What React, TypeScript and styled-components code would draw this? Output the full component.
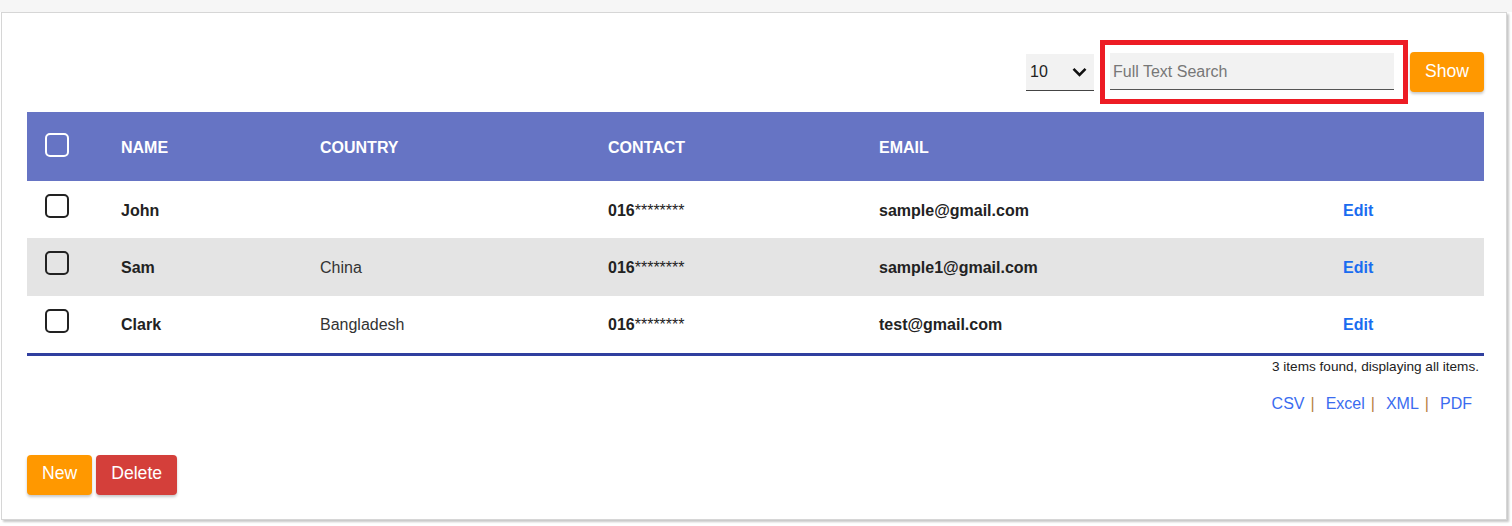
import React from "react";
import styled, { createGlobalStyle } from "styled-components";

const GlobalStyle = createGlobalStyle`
  html, body { margin: 0; padding: 0; background: #f6f6f6; }
  body { font-family: "Liberation Sans", Arial, sans-serif; color: #222; }
  * { box-sizing: border-box; }
`;

const Page = styled.div`
  padding: 12px 0 0 1px;
  height: 526px;
  background: linear-gradient(#f6f6f6 0 12px, #fff 12px);
`;

const Card = styled.div`
  width: 1506px;
  background: #fff;
  border: 1px solid #d6d6d6;
  box-shadow: 2px 2px 2px #c8c8c8;
  padding: 27px 22px 24px 25px;
`;

const Toolbar = styled.div`
  display: flex;
  justify-content: flex-end;
  align-items: center;
  height: 64px;
  margin-bottom: 8px;
`;

const SelectBox = styled.div`
  width: 68px;
  height: 37px;
  background: #f2f2f2;
  border-bottom: 1px solid #444;
  display: flex;
  align-items: center;
  justify-content: space-between;
  padding: 1px 7px 0 4px;
  font-size: 16px;
  color: #222;
  margin-right: 6px;
`;

const Highlight = styled.div`
  border: 5px solid #ed1c24;
  padding: 8px 9px 9px 5px;
  margin-right: 2px;
`;

const SearchInput = styled.input`
  display: block;
  width: 284px;
  height: 37px;
  background: #f2f2f2;
  border: none;
  border-bottom: 1px solid #555;
  outline: none;
  padding: 2px 3px 0;
  font-family: "Liberation Sans", Arial, sans-serif;
  font-size: 16px;
  color: #222;
  &::placeholder { color: #777; }
`;

const Button = styled.button<{ $tone: "orange" | "red" }>`
  height: 40px;
  padding: 0 15px 2px;
  border: none;
  border-radius: 4px;
  background: ${(p) => (p.$tone === "orange" ? "#ff9800" : "#d43f3a")};
  color: #fff;
  font-family: "Liberation Sans", Arial, sans-serif;
  font-size: 17.6px;
  box-shadow: 0 2px 3px rgba(0, 0, 0, 0.22);
  cursor: pointer;
`;

const Table = styled.div`
  width: 1457px;
  border-bottom: 3px solid #303f9f;
`;

const cols = "94px 199px 288px 271px 464px 141px";

const HeadRow = styled.div`
  display: grid;
  grid-template-columns: ${cols};
  height: 69px;
  background: #6674c4;
  color: #fff;
  font-weight: bold;
  font-size: 16px;
  text-transform: uppercase;
`;

const Row = styled.div<{ $striped?: boolean }>`
  display: grid;
  grid-template-columns: ${cols};
  height: 57.33px;
  background: ${(p) => (p.$striped ? "#e4e4e4" : "#fff")};
  font-size: 16px;
`;

const Cell = styled.div<{ $bold?: boolean; $light?: boolean }>`
  display: flex;
  align-items: center;
  padding-top: ${(p) => (p.$light ? 2 : 2)}px;
  font-weight: ${(p) => (p.$bold ? "bold" : "normal")};
  color: ${(p) => (p.$light ? "#fff" : p.$bold ? "#222" : "#333")};
  white-space: nowrap;
`;

const CheckCell = styled.div<{ $top: number }>`
  padding: ${(p) => p.$top}px 0 0 18px;
`;

const Box = styled.div<{ $light?: boolean }>`
  width: 24px;
  height: 24px;
  border: 2px solid ${(p) => (p.$light ? "#fff" : "#222")};
  border-radius: 5px;
`;

const Stars = styled.span`
  font-weight: normal;
`;

const EditLink = styled.a`
  color: #1a6cf0;
  font-weight: bold;
  text-decoration: none;
`;

const Summary = styled.div`
  margin-top: 3px;
  line-height: 16px;
  font-size: 13.6px;
  text-align: right;
  padding-right: 5px;
  color: #222;
`;

const Exports = styled.div`
  margin-top: 20px;
  line-height: 18px;
  font-size: 16px;
  display: flex;
  justify-content: flex-end;
  padding-right: 12px;
`;

const ExportLink = styled.a`
  color: #3a6cf0;
  text-decoration: none;
`;

const Sep = styled.span`
  color: #b8823f;
  margin: 0 11px 0 6px;
`;

const Actions = styled.div`
  margin-top: 42px;
  display: flex;
  gap: 4px;
`;

const Chevron = () => (
  <svg width="15" height="10" viewBox="0 0 15 10">
    <path d="M1.5 1.8 L7.5 7.8 L13.5 1.8" fill="none" stroke="#111" strokeWidth="2.6" />
  </svg>
);

const rows = [
  { name: "John", country: "", email: "sample@gmail.com" },
  { name: "Sam", country: "China", email: "sample1@gmail.com" },
  { name: "Clark", country: "Bangladesh", email: "test@gmail.com" },
];

export default function App() {
  return (
    <Page>
      <GlobalStyle />
      <Card>
        <Toolbar>
          <SelectBox>
            <span>10</span>
            <Chevron />
          </SelectBox>
          <Highlight>
            <SearchInput placeholder="Full Text Search" />
          </Highlight>
          <Button $tone="orange">Show</Button>
        </Toolbar>
        <Table>
          <HeadRow>
            <CheckCell $top={21}>
              <Box $light />
            </CheckCell>
            <Cell $bold $light>Name</Cell>
            <Cell $bold $light>Country</Cell>
            <Cell $bold $light>Contact</Cell>
            <Cell $bold $light>Email</Cell>
            <Cell />
          </HeadRow>
          {rows.map((r, i) => (
            <Row key={r.name} $striped={i === 1}>
              <CheckCell $top={13}>
                <Box />
              </CheckCell>
              <Cell $bold>{r.name}</Cell>
              <Cell>{r.country}</Cell>
              <Cell $bold>
                016<Stars>********</Stars>
              </Cell>
              <Cell $bold>{r.email}</Cell>
              <Cell>
                <EditLink href="#">Edit</EditLink>
              </Cell>
            </Row>
          ))}
        </Table>
        <Summary>3 items found, displaying all items.</Summary>
        <Exports>
          <ExportLink href="#">CSV</ExportLink>
          <Sep>|</Sep>
          <ExportLink href="#">Excel</ExportLink>
          <Sep>|</Sep>
          <ExportLink href="#">XML</ExportLink>
          <Sep>|</Sep>
          <ExportLink href="#">PDF</ExportLink>
        </Exports>
        <Actions>
          <Button $tone="orange">New</Button>
          <Button $tone="red">Delete</Button>
        </Actions>
      </Card>
    </Page>
  );
}
